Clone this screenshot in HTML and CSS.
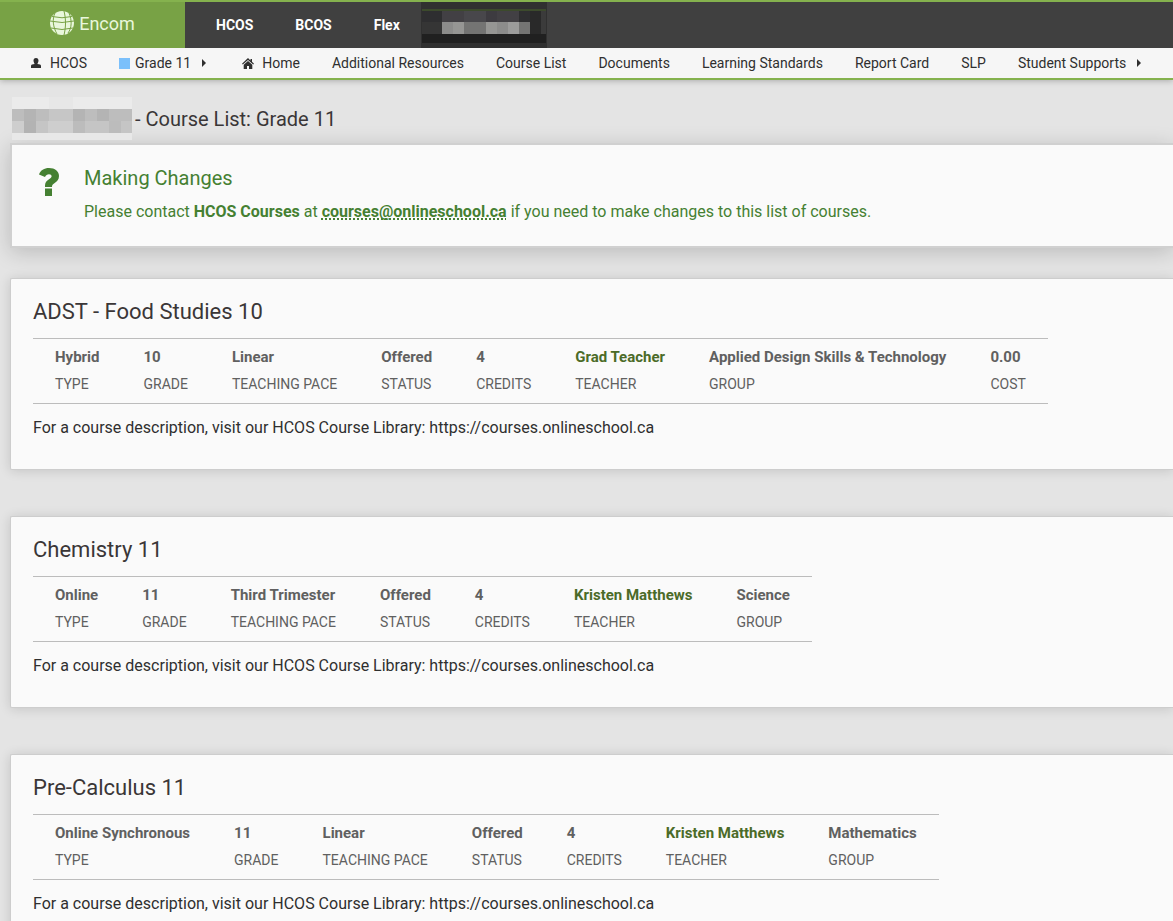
FILE: index.html
```html
<!DOCTYPE html>
<html lang="en">
<head>
<meta charset="utf-8">
<title>Encom - Course List</title>
<link rel="stylesheet" href="styles.css">
</head>
<body>
<header class="header">
  <div class="topbar">
    <a class="brand" href="#">
      <svg class="brand-icon" viewBox="0 0 24 24" aria-hidden="true"><circle cx="12" cy="12" r="12" fill="#e9f7dc"/><g fill="none" stroke="#78a245" stroke-width="1"><path d="M2 5.500Q12 8 22 5.500M0 10Q12 13 24 10M1 17Q12 20 23 17M5 2C2 8 3 16 7 23M14 0C16 8 16 16 14 24M19 2C22 9 22 17 18 22"/></g></svg>
      <span>Encom</span>
    </a>
    <nav class="sites" aria-label="Sites">
      <a href="#">HCOS</a>
      <a href="#">BCOS</a>
      <a href="#">Flex</a>
    </nav>
    <svg class="site-mask" viewBox="0 0 126 46" aria-hidden="true">
      <path fill="#303030" d="M0 0h126v46H0z"/><path fill="#3c4a2c" d="M1 7h124v2H1z"/>
      <path fill="#2e2e30" d="M1 9h20v11H1zM98 9h11v11H98z"/><path fill="#424044" d="M21 9h22v11H21zM76 9h22v11H76z"/><path fill="#48474b" d="M43 9h22v11H43z"/><path fill="#3d3b40" d="M65 9h11v11H65z"/>
      <path fill="#353535" d="M1 20h20v12H1z"/><path fill="#8c8c8b" d="M21 20h11v12H21zM76 20h11v12H76z"/><path fill="#969694" d="M32 20h11v12H32zM65 20h11v12H65z"/><path fill="#747473" d="M43 20h22v12H43zM98 20h11v12H98z"/><path fill="#9c9c9b" d="M87 20h11v12H87z"/><path fill="#292929" d="M109 9h11v23h-11z"/><path fill="#3b3b3b" d="M120 9h5v23h-5z"/>
      <path fill="#202020" d="M1 32h124v9H1z"/>
    </svg>
  </div>
  <nav class="subnav" aria-label="Main">
    <a href="#"><svg class="icon-user" viewBox="0 0 10 10" aria-hidden="true"><path d="M5 0C6.700 0 7.600 1.200 7.500 2.700 7.400 4.300 6.500 5.200 6.400 6L9 6.600Q10 6.900 10 8v2H0V8Q0 6.900 1 6.600L3.600 6C3.500 5.200 2.600 4.300 2.500 2.700 2.400 1.200 3.300 0 5 0z"/></svg>HCOS</a>
    <a href="#"><span class="swatch"></span>Grade 11<svg class="caret" viewBox="0 0 4 8" aria-hidden="true"><path d="M0 0l4 4-4 4z"/></svg></a>
    <a href="#"><svg class="icon-home" viewBox="0 0 12 11" aria-hidden="true"><path d="M6 0l2.500 2.400V1H10v2.800L12 5.800l-.8.8L6 1.900.8 6.600 0 5.800z"/><path d="M6 3l4.300 3.800V11H7V8H5v3H1.700V6.800z"/></svg>Home</a>
    <a href="#">Additional Resources</a>
    <a href="#">Course List</a>
    <a href="#">Documents</a>
    <a href="#">Learning Standards</a>
    <a href="#">Report Card</a>
    <a href="#">SLP</a>
    <a href="#">Student Supports<svg class="caret" viewBox="0 0 4 8" aria-hidden="true"><path d="M0 0l4 4-4 4z"/></svg></a>
  </nav>
</header>
<main class="content">
  <h1 class="page-title">
    <svg class="name-mask" viewBox="0 0 120 44" aria-hidden="true">
      <path fill="#ebebeb" d="M0 0h120v12H0z"/><path fill="#e7e7e7" d="M37 0h24v12H37z"/><path fill="#e8e8e8" d="M0 36h120v7H0z"/>
      <path fill="#bdbdbd" d="M0 12h120v12H0z"/><path fill="#b4b4b4" d="M12 12h12v12H12zM61 12h12v12H61zM85 12h12v12H85z"/><path fill="#c6c6c6" d="M37 12h24v12H37z"/>
      <path fill="#cecece" d="M0 24h120v12H0z"/><path fill="#b3b3b3" d="M12 24h12v12H12z"/><path fill="#bcbcbc" d="M61 24h12v12H61zM97 24h12v12H97z"/><path fill="#c5c5c5" d="M24 24h12v12H24zM73 24h24v12H73zM109 24h11v12h-11z"/>
    </svg>
    <span>- Course List: Grade 11</span>
  </h1>
  <section class="notice">
    <svg class="notice-icon" viewBox="0 0 20 28" aria-hidden="true"><path d="M0 6.500C1.500 2.200 5.200 0 10 0c6 0 10 3.300 10 8 0 3.600-2 5.500-4.300 7C13.600 16.400 13 17 13 19H6v-1.500c0-3.200 1.600-4.800 4-6.300C11.600 10.200 12.600 9.600 12.600 8.300 12.600 7 11.600 6.200 10 6.200 8.100 6.200 7 7.200 6 9z"/><path d="M6 20.500h7V28H6z"/></svg>
    <div>
      <h2 class="notice-title">Making Changes</h2>
      <p class="notice-text">Please contact <strong>HCOS Courses</strong> at <a href="mailto:courses@onlineschool.ca">courses@onlineschool.ca</a> if you need to make changes to this list of courses.</p>
    </div>
  </section>
  <div class="courses">
    <article class="course">
      <h2 class="course-title">ADST - Food Studies 10</h2>
      <dl class="facts">
        <div><dt>TYPE</dt><dd>Hybrid</dd></div>
        <div><dt>GRADE</dt><dd>10</dd></div>
        <div><dt>TEACHING PACE</dt><dd>Linear</dd></div>
        <div><dt>STATUS</dt><dd>Offered</dd></div>
        <div><dt>CREDITS</dt><dd>4</dd></div>
        <div><dt>TEACHER</dt><dd><a href="#">Grad Teacher</a></dd></div>
        <div><dt>GROUP</dt><dd>Applied Design Skills &amp; Technology</dd></div>
        <div><dt>COST</dt><dd>0.00</dd></div>
      </dl>
      <p class="course-text">For a course description, visit our HCOS Course Library: https://courses.onlineschool.ca</p>
    </article>
    <article class="course">
      <h2 class="course-title">Chemistry 11</h2>
      <dl class="facts">
        <div><dt>TYPE</dt><dd>Online</dd></div>
        <div><dt>GRADE</dt><dd>11</dd></div>
        <div><dt>TEACHING PACE</dt><dd>Third Trimester</dd></div>
        <div><dt>STATUS</dt><dd>Offered</dd></div>
        <div><dt>CREDITS</dt><dd>4</dd></div>
        <div><dt>TEACHER</dt><dd><a href="#">Kristen Matthews</a></dd></div>
        <div><dt>GROUP</dt><dd>Science</dd></div>
      </dl>
      <p class="course-text">For a course description, visit our HCOS Course Library: https://courses.onlineschool.ca</p>
    </article>
    <article class="course">
      <h2 class="course-title">Pre-Calculus 11</h2>
      <dl class="facts">
        <div><dt>TYPE</dt><dd>Online Synchronous</dd></div>
        <div><dt>GRADE</dt><dd>11</dd></div>
        <div><dt>TEACHING PACE</dt><dd>Linear</dd></div>
        <div><dt>STATUS</dt><dd>Offered</dd></div>
        <div><dt>CREDITS</dt><dd>4</dd></div>
        <div><dt>TEACHER</dt><dd><a href="#">Kristen Matthews</a></dd></div>
        <div><dt>GROUP</dt><dd>Mathematics</dd></div>
      </dl>
      <p class="course-text">For a course description, visit our HCOS Course Library: https://courses.onlineschool.ca</p>
    </article>
  </div>
</main>
</body>
</html>
```
FILE: styles.css
```css
* { box-sizing: border-box; }
html { scrollbar-width: none; }
body {
  margin: 0;
  background: #e4e4e4;
  color: #2f2f2f;
  font-family: Roboto, "Liberation Sans", sans-serif;
  font-size: 16px;
}
h1, h2, p, dl, dd { margin: 0; }
h1, h2 { font-weight: 400; }
a { color: inherit; text-decoration: none; }
svg { flex: none; }

.header {
  border-top: 2px solid #85b24e;
  border-bottom: 2px solid #85b24e;
  background: #f6f6f6;
  box-shadow: 0 1px 6px rgba(0, 0, 0, 0.25);
}
.topbar {
  display: flex;
  height: 46px;
  background: #404040;
}
.brand {
  display: flex;
  align-items: center;
  justify-content: center;
  gap: 5px;
  width: 185px;
  padding-bottom: 4px;
  background: #78a245;
  color: #e9f7dc;
  font-size: 18px;
}
.brand-icon { width: 24px; height: 24px; }
.sites {
  display: flex;
  align-items: center;
  gap: 42px;
  padding: 0 21px 0 31px;
  color: #fff;
  font-size: 14px;
  font-weight: 700;
}
.site-mask { width: 126px; height: 46px; }

.subnav {
  display: flex;
  align-items: center;
  gap: 32px;
  height: 30px;
  padding: 0 31px;
  font-size: 14px;
  white-space: nowrap;
}
.subnav a { display: flex; align-items: center; }
.subnav svg { fill: #2f2f2f; }
.icon-user { width: 10px; height: 10px; margin-right: 9px; }
.icon-home { width: 12px; height: 11px; margin-right: 8px; }
.swatch { width: 11px; height: 11px; margin-right: 5px; background: #7bc0fb; }
.caret { width: 4px; height: 8px; margin: 0 4px 0 11px; }

.content { padding: 15px 0 0 10px; }
.page-title {
  display: flex;
  align-items: center;
  gap: 3px;
  height: 48px;
  padding-left: 2px;
  color: #3a3637;
  font-size: 20px;
}
.name-mask { width: 120px; height: 44px; }

.notice {
  display: flex;
  gap: 25px;
  padding: 21px 27px 22px;
  border: 2px solid #d0d0d0;
  border-right: 0;
  background: #fafafa;
  box-shadow: 0 4px 20px rgba(0, 0, 0, 0.18);
  color: #458032;
}
.notice-icon { width: 20px; height: 28px; margin-top: 2px; fill: #458032; }
.notice-title { font-size: 20px; line-height: 24px; }
.notice-text { margin-top: 10px; line-height: 24px; }
.notice-text a {
  font-weight: 700;
  text-decoration: underline dotted 2px;
  text-decoration-skip-ink: none;
}

.courses { display: grid; gap: 46px; padding-top: 30px; }
.course {
  padding: 20px 22px 29px;
  border: 1px solid #cdcdcd;
  border-right: 0;
  border-radius: 2px 0 0 2px;
  background: #fafafa;
  box-shadow: 0 1px 12px rgba(0, 0, 0, 0.14);
}
.course-title { color: #3a3637; font-size: 22px; line-height: 26px; }
.facts {
  display: flex;
  gap: 44px;
  width: fit-content;
  margin-top: 13px;
  padding: 5px 22px;
  border-top: 1px solid #bcbcbc;
  border-bottom: 1px solid #bcbcbc;
  color: #606060;
  white-space: nowrap;
}
.facts div { display: flex; flex-direction: column-reverse; }
.facts dt { font-size: 14px; line-height: 27px; }
.facts dd { font-size: 15px; font-weight: 700; line-height: 27px; }
.facts a { color: #4b6b28; }
.course-text { margin-top: 12px; line-height: 24px; }
```
